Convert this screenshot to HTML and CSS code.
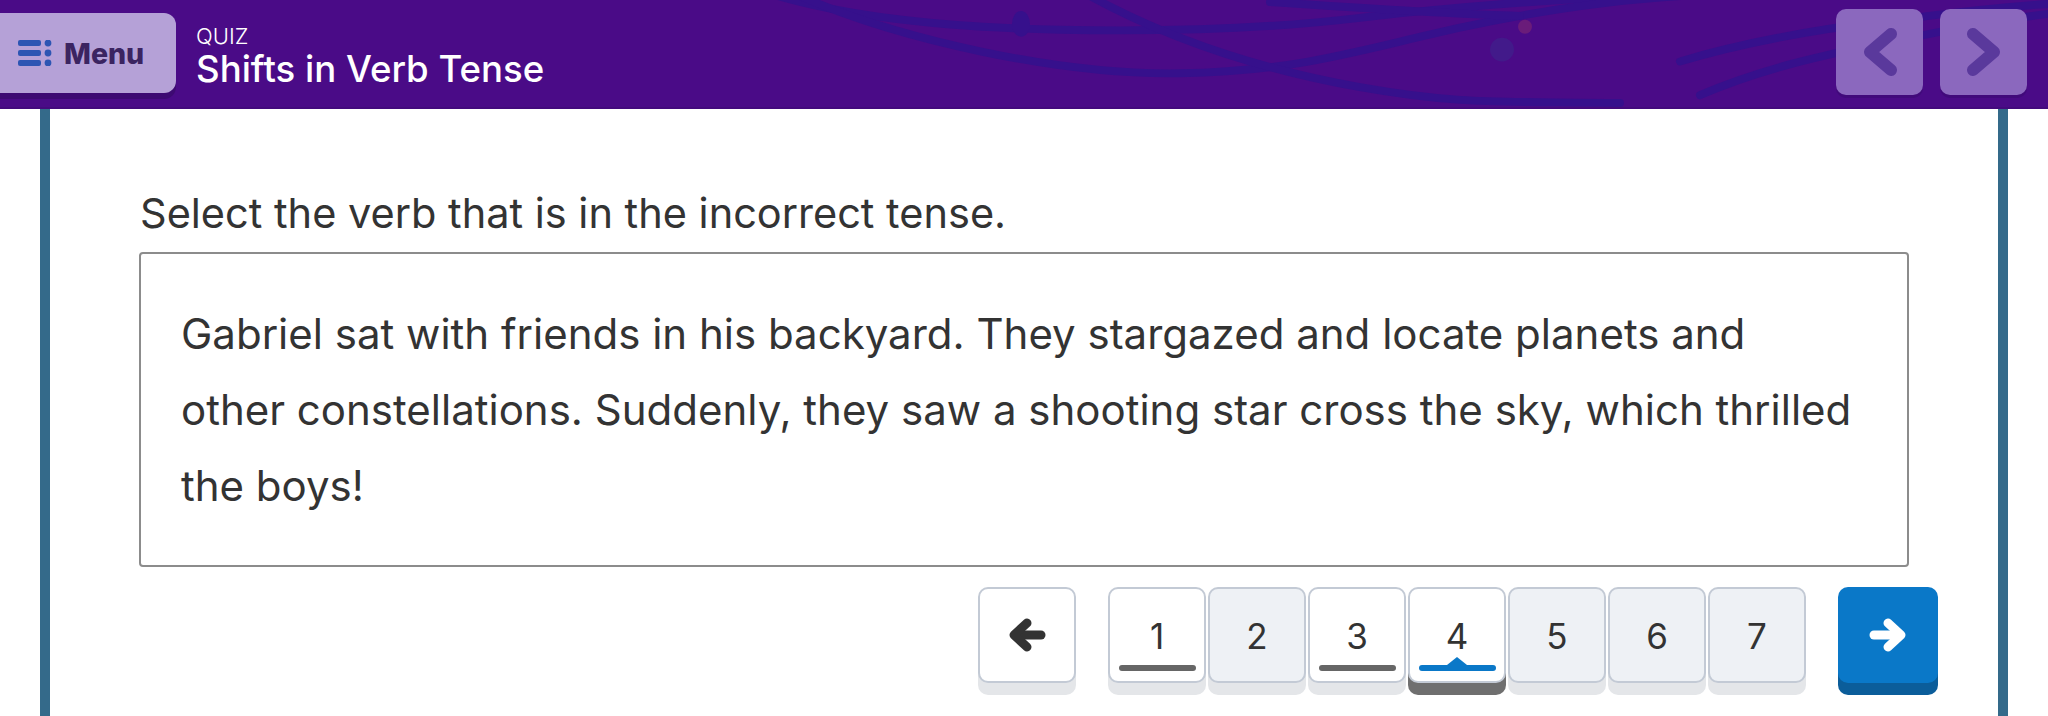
FILE: index.html
```html
<!DOCTYPE html>
<html lang="en">
<head>
<meta charset="utf-8">
<title>Shifts in Verb Tense</title>
<link rel="stylesheet" href="styles.css">
</head>
<body>
<header class="topbar">
  <svg class="decor" viewBox="0 0 2048 108" preserveAspectRatio="none" aria-hidden="true">
    <g fill="none" stroke="#36108c" stroke-width="8" stroke-linecap="round">
      <path d="M778 -4 C 860 20, 960 28, 1060 30 S 1260 30, 1360 18 S 1560 -2, 1700 -6"/>
      <path d="M800 -4 C 900 40, 1060 76, 1180 74 S 1360 50, 1460 28 S 1640 -4, 1760 -8"/>
      <path d="M1090 -4 C 1170 40, 1260 70, 1360 88 S 1500 102, 1620 104"/>
      <path d="M1270 2 C 1360 8, 1440 14, 1520 16"/>
      <path d="M1680 62 C 1740 44, 1800 32, 1880 22 S 1990 8, 2048 4"/>
      <path d="M1700 96 C 1760 70, 1820 56, 1900 40 S 2000 20, 2048 14"/>
    </g>
    <ellipse cx="1021" cy="24" rx="9" ry="13" fill="#36108c"/>
    <circle cx="1502" cy="50" r="12" fill="#421a8a"/>
    <circle cx="1525" cy="27" r="7" fill="#6a1c7a"/>
  </svg>
  <button class="menu-btn" type="button">
    <svg class="menu-icon" width="34" height="26" viewBox="0 0 34 26" aria-hidden="true">
      <g fill="#2d55b3">
        <rect x="0" y="0" width="23" height="6" rx="2"/>
        <rect x="0" y="10" width="23" height="6" rx="2"/>
        <rect x="0" y="20" width="23" height="6" rx="2"/>
        <circle cx="30" cy="3" r="3.4"/>
        <circle cx="30" cy="13" r="3.4"/>
        <circle cx="30" cy="23" r="3.4"/>
      </g>
    </svg>
    <span>Menu</span>
  </button>
  <div class="title-block">
    <div class="kicker">QUIZ</div>
    <h1 class="title">Shifts in Verb Tense</h1>
  </div>
  <div class="nav">
    <button class="nav-btn" type="button" aria-label="Previous">
      <svg width="38" height="50" viewBox="0 0 38 50" aria-hidden="true"><polyline points="30,7 9,25 30,43" fill="none" stroke="#5a399c" stroke-width="12" stroke-linecap="round" stroke-linejoin="round"/></svg>
    </button>
    <button class="nav-btn" type="button" aria-label="Next">
      <svg width="38" height="50" viewBox="0 0 38 50" aria-hidden="true"><polyline points="8,7 29,25 8,43" fill="none" stroke="#5a399c" stroke-width="12" stroke-linecap="round" stroke-linejoin="round"/></svg>
    </button>
  </div>
</header>

<main class="stage">
  <section class="card">
    <p class="prompt">Select the verb that is in the incorrect tense.</p>
    <div class="passage">
      <p>Gabriel sat with friends in his backyard. They stargazed and locate planets and<br>other constellations. Suddenly, they saw a shooting star cross the sky, which thrilled<br>the boys!</p>
    </div>
    <nav class="pager">
      <button class="pg-btn arrow-btn" type="button" aria-label="Previous question">
        <svg width="40" height="36" viewBox="0 0 40 36" aria-hidden="true"><g fill="none" stroke="#333" stroke-width="9" stroke-linecap="round" stroke-linejoin="round"><path d="M34 18 H9"/><path d="M20 6 L7 18 L20 30"/></g></svg>
      </button>
      <div class="pages">
        <button class="pg-btn page done" type="button"><span class="num">1</span><span class="bar"></span></button>
        <button class="pg-btn page" type="button"><span class="num">2</span><span class="bar"></span></button>
        <button class="pg-btn page done" type="button"><span class="num">3</span><span class="bar"></span></button>
        <button class="pg-btn page current" type="button"><span class="num">4</span><span class="bar"></span></button>
        <button class="pg-btn page" type="button"><span class="num">5</span><span class="bar"></span></button>
        <button class="pg-btn page" type="button"><span class="num">6</span><span class="bar"></span></button>
        <button class="pg-btn page" type="button"><span class="num">7</span><span class="bar"></span></button>
      </div>
      <button class="pg-btn next-btn" type="button" aria-label="Next question">
        <svg width="40" height="36" viewBox="0 0 40 36" aria-hidden="true"><g fill="none" stroke="#fff" stroke-width="9" stroke-linecap="round" stroke-linejoin="round"><path d="M6 18 H31"/><path d="M20 6 L33 18 L20 30"/></g></svg>
      </button>
    </nav>
  </section>
</main>
</body>
</html>
```
FILE: styles.css
```css
* { box-sizing: border-box; }
html, body { margin: 0; padding: 0; }
body {
  background: #fff;
  font-family: Inter, "Open Sans", sans-serif;
  color: #333;
  overflow: hidden;
}
button { font-family: inherit; cursor: pointer; }

/* ---------- top bar ---------- */
.topbar {
  position: relative;
  height: 109px;
  background: #4a0b87;
  display: flex;
  align-items: flex-start;
  overflow: hidden;
  border-bottom: 2px solid #430a7c;
}
.decor {
  position: absolute;
  left: 0; top: 0;
  width: 100%; height: 100%;
}
.menu-btn {
  position: relative;
  margin-top: 13px;
  width: 176px;
  height: 80px;
  border: 0;
  border-radius: 0 12px 12px 0;
  background: #b5a1d7;
  box-shadow: 0 6px 0 #3d0a72;
  display: flex;
  align-items: center;
  gap: 12px;
  padding: 0 0 0 18px;
  color: #3b2461;
  font-size: 28.5px;
  font-weight: 800;
}
.title-block {
  position: relative;
  margin: 23px 0 0 20px;
  color: #fff;
}
.kicker {
  font-size: 22px;
  line-height: 26px;
  font-weight: 300;
}
.title {
  margin: 0;
  font-size: 36.6px;
  line-height: 40px;
  font-weight: 500;
}
.nav {
  position: relative;
  margin: 9px 21px 0 auto;
  display: flex;
  gap: 17px;
}
.nav-btn {
  width: 87px;
  height: 86px;
  border: 0;
  border-radius: 10px;
  background: #8b68be;
  box-shadow: 0 3px 0 rgba(50, 10, 100, .35);
  display: flex;
  align-items: center;
  justify-content: center;
  padding: 0;
}

/* ---------- stage ---------- */
.stage {
  padding: 0 40px;
}
.card {
  min-height: 607px;
  border-left: 10px solid #346a8a;
  border-right: 10px solid #346a8a;
  padding: 79px 60px 0;
}
.prompt {
  margin: 0 0 14px 30px;
  font-size: 41.5px;
  line-height: 50px;
  color: #333;
}
.passage {
  margin: 0 29px;
  border: 2px solid #8c8c8c;
  border-radius: 4px;
  padding: 42px 40px 41px 40px;
}
.passage p {
  margin: 0;
  font-size: 42px;
  line-height: 76px;
  color: #333;
  white-space: nowrap;
}

/* ---------- pager ---------- */
.pager {
  margin-top: 20px;
  display: flex;
  justify-content: flex-end;
  align-items: flex-start;
}
.pages {
  display: flex;
  gap: 2px;
  margin: 0 32px;
}
.pg-btn {
  width: 98px;
  height: 96px;
  border: 2px solid #c3cad5;
  border-radius: 10px;
  background: #fff;
  box-shadow: 0 12px 0 #e4e6e9;
  padding: 0;
  color: #333;
}
.arrow-btn {
  display: flex;
  align-items: center;
  justify-content: center;
}
.page {
  background: #eef1f5;
  display: flex;
  flex-direction: column;
  align-items: center;
  padding-top: 30px;
}
.page.done, .page.current { background: #fff; }
.page.current { box-shadow: 0 12px 0 #6f6f6f; }
.num {
  font-size: 35px;
  line-height: 35px;
  font-weight: 400;
}
.bar {
  position: relative;
  margin-top: 11px;
  width: 77px;
  height: 6px;
  border-radius: 3px;
}
.page.done .bar { background: #666; }
.page.current .bar { background: #0a78c8; }
.page.current .bar::before {
  content: "";
  position: absolute;
  left: 50%;
  top: -8px;
  margin-left: -10px;
  border-left: 10px solid transparent;
  border-right: 10px solid transparent;
  border-bottom: 8px solid #0a78c8;
}
.next-btn {
  width: 100px;
  border: 0;
  background: #0a78c8;
  box-shadow: 0 12px 0 #0b5d9a;
  display: flex;
  align-items: center;
  justify-content: center;
}
```
